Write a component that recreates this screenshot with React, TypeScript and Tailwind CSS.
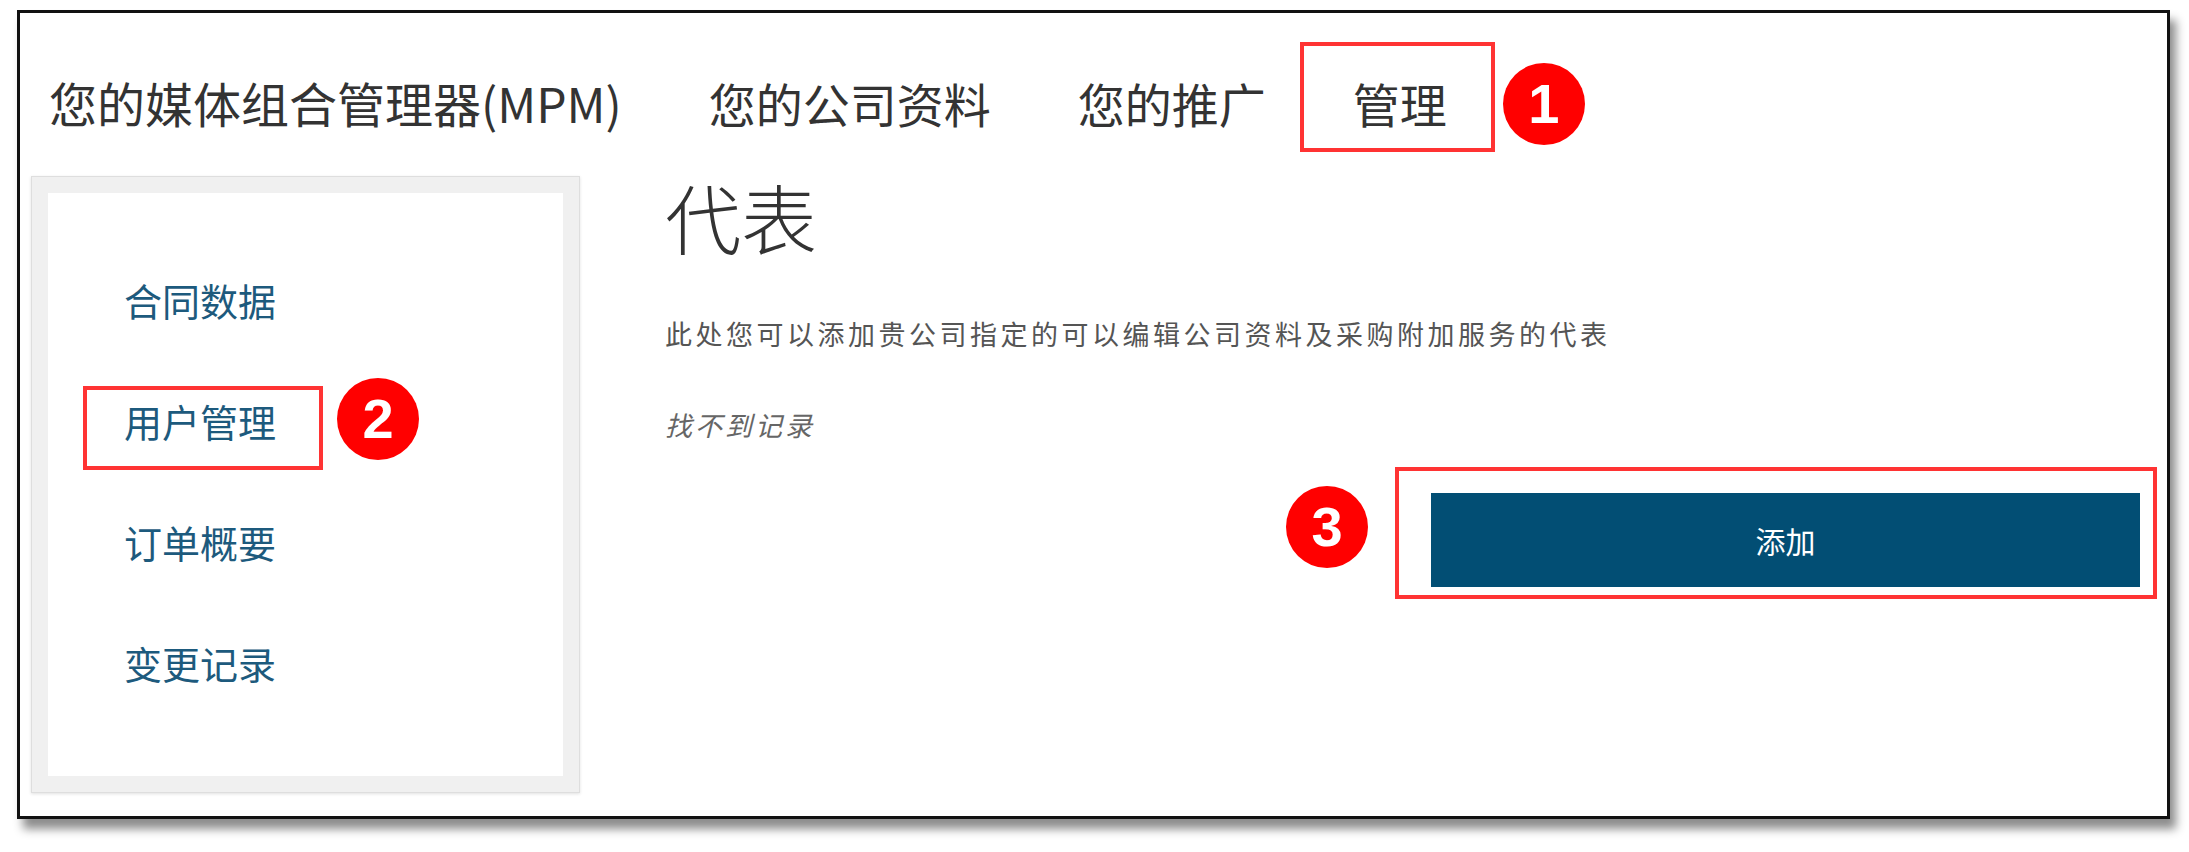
import React from 'react';

const cjk = { fontFamily: '"Noto Sans CJK SC", "Noto Sans", sans-serif' };
const num = { fontFamily: '"Liberation Sans", Arial, sans-serif' };

const navItems = ['您的媒体组合管理器(MPM)', '您的公司资料', '您的推广'];
const sideItems = ['合同数据', '用户管理', '订单概要', '变更记录'];

function Badge({ n, className }: { n: number; className: string }) {
  return (
    <div
      className={`absolute flex h-[82px] w-[82px] items-center justify-center rounded-full bg-[#ff0000] text-[56px] font-bold leading-none text-white ${className}`}
      style={num}
    >
      {n}
    </div>
  );
}

export default function App() {
  return (
    <div className="h-[852px] w-[2189px] overflow-hidden bg-white pl-[17px] pt-[10px]" style={cjk}>
      <div className="flex h-[809px] w-[2153px] flex-col border-[3px] border-[#111] bg-white shadow-[6px_10px_9px_rgba(0,0,0,0.45)]">
        {/* top navigation */}
        <nav className="flex h-[163px] items-center gap-[87px] pl-[29px] pt-[15px] text-[48px] leading-none text-[#333]">
          {navItems.map((item) => (
            <span key={item} className={item.length < 7 ? 'text-[47px]' : ''}>
              {item}
            </span>
          ))}
          <span className="relative text-[47px]">
            管理
            <span className="absolute -bottom-[26px] -left-[53px] -right-[48px] -top-[37px] border-[4px] border-[#ff3333]" />
            <Badge n={1} className="-top-[16px] left-[150px]" />
          </span>
        </nav>

        <div className="flex flex-1">
          {/* sidebar */}
          <aside className="ml-[11px] h-[617px] w-[549px] border border-[#dedede] bg-[#f0f0f0] p-[16px] shadow-[0_1px_3px_rgba(0,0,0,0.12)]">
            <ul className="h-full bg-white pl-[76px] pt-[46px] text-[38px] leading-none text-[#1d5a7d]">
              {sideItems.map((item, i) => (
                <li key={item} className="flex h-[121px] items-center">
                  <span className="relative">
                    {item}
                    {i === 1 && (
                      <>
                        <span className="absolute -bottom-[30px] -left-[41px] -right-[47px] -top-[16px] border-[4px] border-[#ff3333]" />
                        <Badge n={2} className="-top-[24px] left-[213px]" />
                      </>
                    )}
                  </span>
                </li>
              ))}
            </ul>
          </aside>

          {/* main content */}
          <main className="ml-[85px] flex flex-1 flex-col pr-[27px]">
            <h1 className="mt-[2px] text-[76px] font-light leading-none text-[#333]">代表</h1>
            <p className="mt-[66px] text-[27px] leading-none tracking-[3.5px] text-[#555]">
              此处您可以添加贵公司指定的可以编辑公司资料及采购附加服务的代表
            </p>
            <p className="mt-[64px] text-[27px] italic leading-none tracking-[3px] text-[#666]">找不到记录</p>
            <div className="mt-[55px] flex justify-end">
              <div className="relative">
                <button className="flex h-[94px] w-[709px] items-center justify-center bg-[#024e74] text-[30px] leading-none text-white">
                  添加
                </button>
                <span className="absolute -bottom-[12px] -left-[36px] -right-[17px] -top-[26px] border-[4px] border-[#ff3333]" />
                <Badge n={3} className="-left-[145px] -top-[7px]" />
              </div>
            </div>
          </main>
        </div>
      </div>
    </div>
  );
}
